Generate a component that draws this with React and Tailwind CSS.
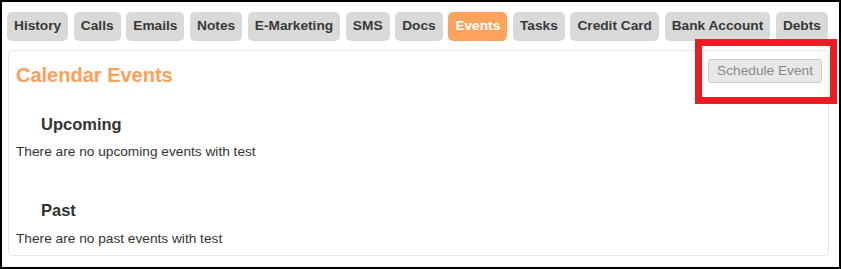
import React from "react";

const tabs = [
  "History",
  "Calls",
  "Emails",
  "Notes",
  "E-Marketing",
  "SMS",
  "Docs",
  "Events",
  "Tasks",
  "Credit Card",
  "Bank Account",
  "Debts",
];

const App = () => {
  const activeTab = "Events";

  return (
    <div
      className="relative w-[841px] h-[269px] border-2 border-black bg-white text-[#333333] overflow-hidden"
      style={{ fontFamily: '"Liberation Sans", Arial, sans-serif' }}
    >
      {/* tab strip */}
      <div className="flex gap-[5.7px] pl-[5px] pt-[10px]">
        {tabs.map((tab) => (
          <div
            key={tab}
            className={`shrink-0 whitespace-nowrap h-[29px] flex items-center px-[7px] rounded-[5px] text-[13.7px] font-bold ${
              activeTab === tab
                ? "bg-[#ffa25b] text-white"
                : "bg-[#d9d9d9] text-[#383838]"
            }`}
          >
            {tab}
          </div>
        ))}
      </div>

      {/* events panel */}
      <div className="ml-[6px] mr-[10px] mt-[9px] border border-[#e6e6e6] rounded-[4px] px-[7px] pt-[8px] pb-[8px]">
        <div className="flex items-start justify-between">
          <h2 className="mt-[5px] text-[20px] leading-[22px] font-bold text-[#fd9f5b]">
            Calendar Events
          </h2>
          <button className="h-[24px] px-[8px] mr-[-1px] bg-[#e8e8e8] border border-[#cccccc] rounded-[3px] text-[13.7px] text-[#8a8a8a] whitespace-nowrap">
            Schedule Event
          </button>
        </div>

        <h4 className="mt-[28px] pl-[25px] text-[16.5px] leading-[20px] font-bold text-[#333333]">
          Upcoming
        </h4>
        <p className="mt-[9px] text-[13.7px] leading-[17px]">
          There are no upcoming events with test
        </p>

        <h4 className="mt-[40px] pl-[25px] text-[16.5px] leading-[20px] font-bold text-[#333333]">
          Past
        </h4>
        <p className="mt-[10px] text-[13.7px] leading-[17px]">
          There are no past events with test
        </p>
      </div>

      {/* red highlight annotation */}
      <div className="absolute left-[693px] top-[37px] w-[142px] h-[65px] border-[7px] border-[#ed1c24] pointer-events-none" />
    </div>
  );
};

export default App;
